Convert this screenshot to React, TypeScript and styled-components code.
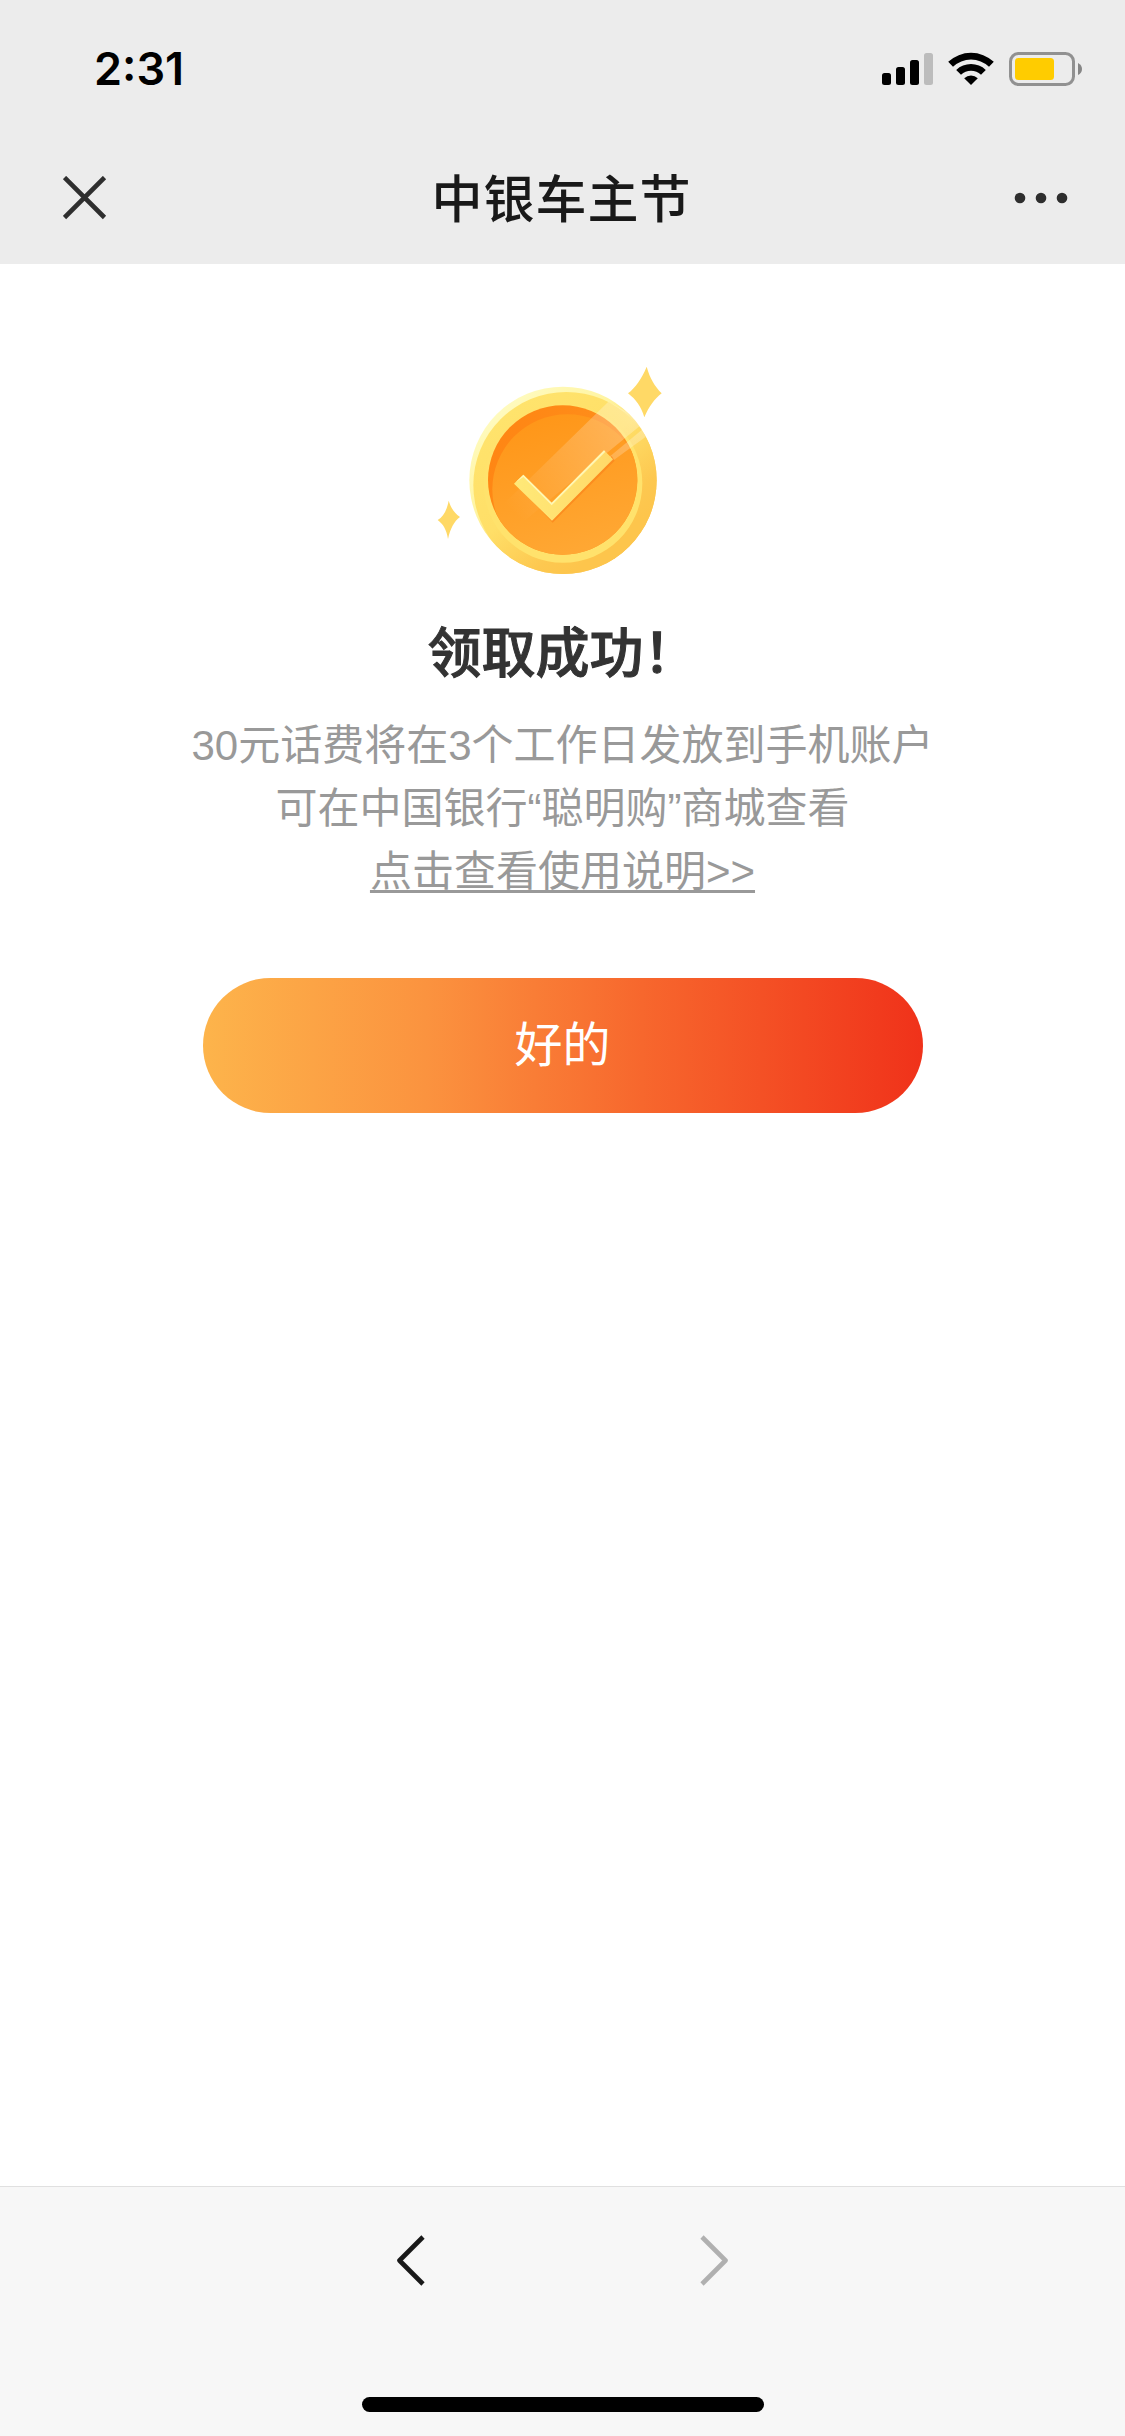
import React from "react";
import styled, { createGlobalStyle } from "styled-components";

const GlobalStyle = createGlobalStyle`
  * { box-sizing: border-box; }
  html, body { margin: 0; padding: 0; background: #fff; }
  body { font-family: "Liberation Sans", "Noto Sans CJK SC", sans-serif; }
`;

const Screen = styled.div`
  width: 1125px;
  height: 2436px;
  display: flex;
  flex-direction: column;
  background: #fff;
  overflow: hidden;
`;

const Header = styled.header`
  height: 264px;
  flex: none;
  background: #ececec;
`;

const StatusBar = styled.div`
  height: 132px;
  display: flex;
  justify-content: space-between;
  align-items: flex-start;
  padding: 42px 42px 0 94px;
`;

const Time = styled.span`
  font: 600 45px/54px Inter, sans-serif;
  color: #000;
`;

const StatusIcons = styled.div`
  display: flex;
  align-items: center;
  gap: 15px;
  padding-top: 10px;
  svg { display: block; }
`;

const NavBar = styled.div`
  height: 132px;
  display: grid;
  grid-template-columns: 120px 1fr 120px;
  align-items: center;
`;

const IconButton = styled.button<{ $align?: string; $pad?: string }>`
  display: flex;
  justify-content: ${(p) => p.$align ?? "center"};
  align-items: center;
  padding: ${(p) => p.$pad ?? "0"};
  border: 0;
  background: none;
  svg { display: block; }
`;

const PageTitle = styled.h1`
  margin: 0;
  padding: 0 2px 4px 0;
  text-align: center;
  font: 500 51px/72px "Noto Sans CJK SC", sans-serif;
  letter-spacing: 1px;
  color: #191919;
`;

const Content = styled.main`
  flex: 1;
  display: flex;
  flex-direction: column;
  align-items: center;
  padding-top: 86px;
`;

const Badge = styled.div`
  width: 285px;
  height: 240px;
  svg { display: block; }
`;

const Headline = styled.h2`
  margin: 20px 0 0;
  font: 500 54px/80px "Noto Sans CJK SC", sans-serif;
  -webkit-text-stroke: 1px #333;
  color: #333;
`;

const Note = styled.p`
  margin: 24px 0 0;
  text-align: center;
  font-size: 42px;
  line-height: 63px;
  color: #999;
`;

const Line = styled.span`
  display: block;
  height: 63px;
`;

const HelpLink = styled.a`
  color: inherit;
  text-decoration: underline;
  text-decoration-thickness: 3px;
  text-underline-offset: 4px;
  text-decoration-skip-ink: none;
`;

const PrimaryButton = styled.button`
  margin-top: 75px;
  width: 720px;
  height: 135px;
  border: 0;
  border-radius: 68px;
  padding: 0 0 9px;
  background: linear-gradient(90deg, #fdb44b, #fb933f 31%, #f7672d 61%, #f0321a);
  color: #fff;
  font: 400 48px/72px "Noto Sans CJK SC", sans-serif;
`;

const Footer = styled.footer`
  height: 250px;
  flex: none;
  display: flex;
  flex-direction: column;
  align-items: center;
  justify-content: space-between;
  padding: 48px 0 24px;
  background: #f7f7f7;
  border-top: 1px solid #e0e0e0;
`;

const History = styled.nav`
  display: flex;
  gap: 275px;
`;

const HomeIndicator = styled.div`
  width: 402px;
  height: 15px;
  border-radius: 8px;
  background: #000;
`;

const Signal = () => (
  <svg width="51" height="34" viewBox="0 0 51 34">
    <rect x="0" y="21" width="9" height="12" rx="2.5" />
    <rect x="14" y="15" width="9" height="18" rx="2.5" />
    <rect x="28" y="8" width="9" height="25" rx="2.5" />
    <rect x="42" y="1" width="9" height="32" rx="2.5" fill="#bcbcbc" />
  </svg>
);

const Wifi = () => (
  <svg width="46" height="34" viewBox="0 0 46 34">
    <path d="M0.2 9.8A33.5 33.5 0 0 1 45.8 9.8L41 14.7A26.4 26.4 0 0 0 5 14.7Z" />
    <path d="M8.2 17.9A21.8 21.8 0 0 1 37.8 17.9L33 22.7A14.8 14.8 0 0 0 13 22.7Z" />
    <path d="M16.2 26.2A10.2 10.2 0 0 1 29.8 26.2L23 33Z" />
  </svg>
);

const Battery = () => (
  <svg width="74" height="34" viewBox="0 0 74 34">
    <rect x="1.5" y="1.5" width="63" height="31" rx="8" fill="none" stroke="#919191" strokeWidth="3" />
    <rect x="6" y="6" width="39" height="22" rx="3.5" fill="#ffcc00" />
    <path d="M69 11Q73 13 73 17T69 23Z" fill="#868686" />
  </svg>
);

const CloseIcon = () => (
  <svg width="44" height="44" viewBox="0 0 44 44" stroke="#2e2e2e" strokeWidth="4.6">
    <path d="M1.5 1.5L41.5 41.5M41.5 1.5L1.5 41.5" />
  </svg>
);

const MoreIcon = () => (
  <svg width="54" height="12" viewBox="0 0 54 12" fill="#2e2e2e">
    <circle cx="6" cy="6" r="5.3" />
    <circle cx="27" cy="6" r="5.3" />
    <circle cx="48" cy="6" r="5.3" />
  </svg>
);

const Chevron = ({ forward = false }: { forward?: boolean }) => (
  <svg width="28" height="52" viewBox="0 0 28 52" fill="none" stroke={forward ? "#b0b0b0" : "#191919"} strokeWidth="4.6" strokeLinejoin="round">
    <path d={forward ? "M2 2L25.5 25.5L2 49" : "M26 2L2.5 25.5L26 49"} />
  </svg>
);

const Coin = () => (
  <svg width="260" height="240" viewBox="0 0 780 720">
    <defs>
      <linearGradient id="rim" x1="0.15" y1="0.1" x2="0.85" y2="0.9">
        <stop offset="0" stopColor="#fffbc0" />
        <stop offset="0.35" stopColor="#fff4a0" />
        <stop offset="0.55" stopColor="#fedb68" />
        <stop offset="1" stopColor="#fdc44b" />
      </linearGradient>
      <linearGradient id="band" x1="0.2" y1="0.1" x2="0.75" y2="0.8">
        <stop offset="0" stopColor="#ffe36c" />
        <stop offset="0.5" stopColor="#ffdf68" />
        <stop offset="0.85" stopColor="#fdc850" />
        <stop offset="1" stopColor="#fdc54c" />
      </linearGradient>
      <linearGradient id="face" x1="0.3" y1="0" x2="0.6" y2="1">
        <stop offset="0" stopColor="#ff9618" />
        <stop offset="1" stopColor="#ffa936" />
      </linearGradient>
      <linearGradient id="groove" x1="0" y1="0" x2="1" y2="0.5">
        <stop offset="0" stopColor="#ff8412" />
        <stop offset="1" stopColor="#ff921e" />
      </linearGradient>
      <linearGradient id="shine" gradientUnits="userSpaceOnUse" x1="610" y1="190" x2="290" y2="500">
        <stop offset="0" stopColor="#fff" stopOpacity="0.27" />
        <stop offset="1" stopColor="#fff" stopOpacity="0" />
      </linearGradient>
      <linearGradient id="tick" x1="0" y1="0" x2="1" y2="0">
        <stop offset="0" stopColor="#ffe978" />
        <stop offset="1" stopColor="#ffd968" />
      </linearGradient>
      <clipPath id="coinShape"><circle cx="429" cy="391" r="281" /></clipPath>
      <clipPath id="faceShape"><circle cx="428" cy="390" r="224" /></clipPath>
    </defs>
    <circle cx="429" cy="391" r="281" fill="url(#rim)" />
    <circle cx="439" cy="405" r="279" fill="url(#band)" clipPath="url(#coinShape)" />
    <circle cx="429" cy="400" r="238" fill="#ffe26c" />
    <circle cx="428" cy="390" r="224" fill="url(#groove)" />
    <circle cx="442" cy="418" r="225" fill="url(#face)" clipPath="url(#faceShape)" />
    <g clipPath="url(#coinShape)">
      <path d="M565 155L220 492L275 545L400 440L675 215Z" fill="url(#shine)" />
      <path d="M675 232L545 340L562 344L700 244Z" fill="url(#shine)" />
    </g>
    <path d="M300 415L398 518L584 332L575 318L398 495Z" fill="#fb861c" opacity="0.75" />
    <path d="M282 401L310 374L395 458L552 301L579 328L396 512Z" fill="url(#tick)" />
    <path d="M287 397L310 374L395 458L552 301L556 305L395 466L310 381Z" fill="#fff7b5" />
    <path d="M680 50C690 86 704 108 725 130C703 147 687 170 673 202C663 169 648 149 624 130C646 113 665 87 680 50Z" fill="#ffd966" />
    <path d="M86 452C94 476 102 488 120 501C102 514 91 536 84 567C79 538 70 523 53 510C70 500 80 483 86 452Z" fill="#ffd966" />
  </svg>
);

export default function App() {
  return (
    <Screen>
      <GlobalStyle />
      <Header>
        <StatusBar>
          <Time>2:31</Time>
          <StatusIcons>
            <Signal />
            <Wifi />
            <Battery />
          </StatusIcons>
        </StatusBar>
        <NavBar>
          <IconButton aria-label="关闭" $align="flex-start" $pad="0 0 0 63px"><CloseIcon /></IconButton>
          <PageTitle>中银车主节</PageTitle>
          <IconButton aria-label="更多" $align="flex-end" $pad="0 57px 0 0"><MoreIcon /></IconButton>
        </NavBar>
      </Header>
      <Content>
        <Badge><Coin /></Badge>
        <Headline>领取成功！</Headline>
        <Note>
          <Line>30元话费将在3个工作日发放到手机账户</Line>
          <Line>可在中国银行“聪明购”商城查看</Line>
          <Line><HelpLink>点击查看使用说明&gt;&gt;</HelpLink></Line>
        </Note>
        <PrimaryButton>好的</PrimaryButton>
      </Content>
      <Footer>
        <History>
          <IconButton aria-label="后退"><Chevron /></IconButton>
          <IconButton aria-label="前进"><Chevron forward /></IconButton>
        </History>
        <HomeIndicator />
      </Footer>
    </Screen>
  );
}
